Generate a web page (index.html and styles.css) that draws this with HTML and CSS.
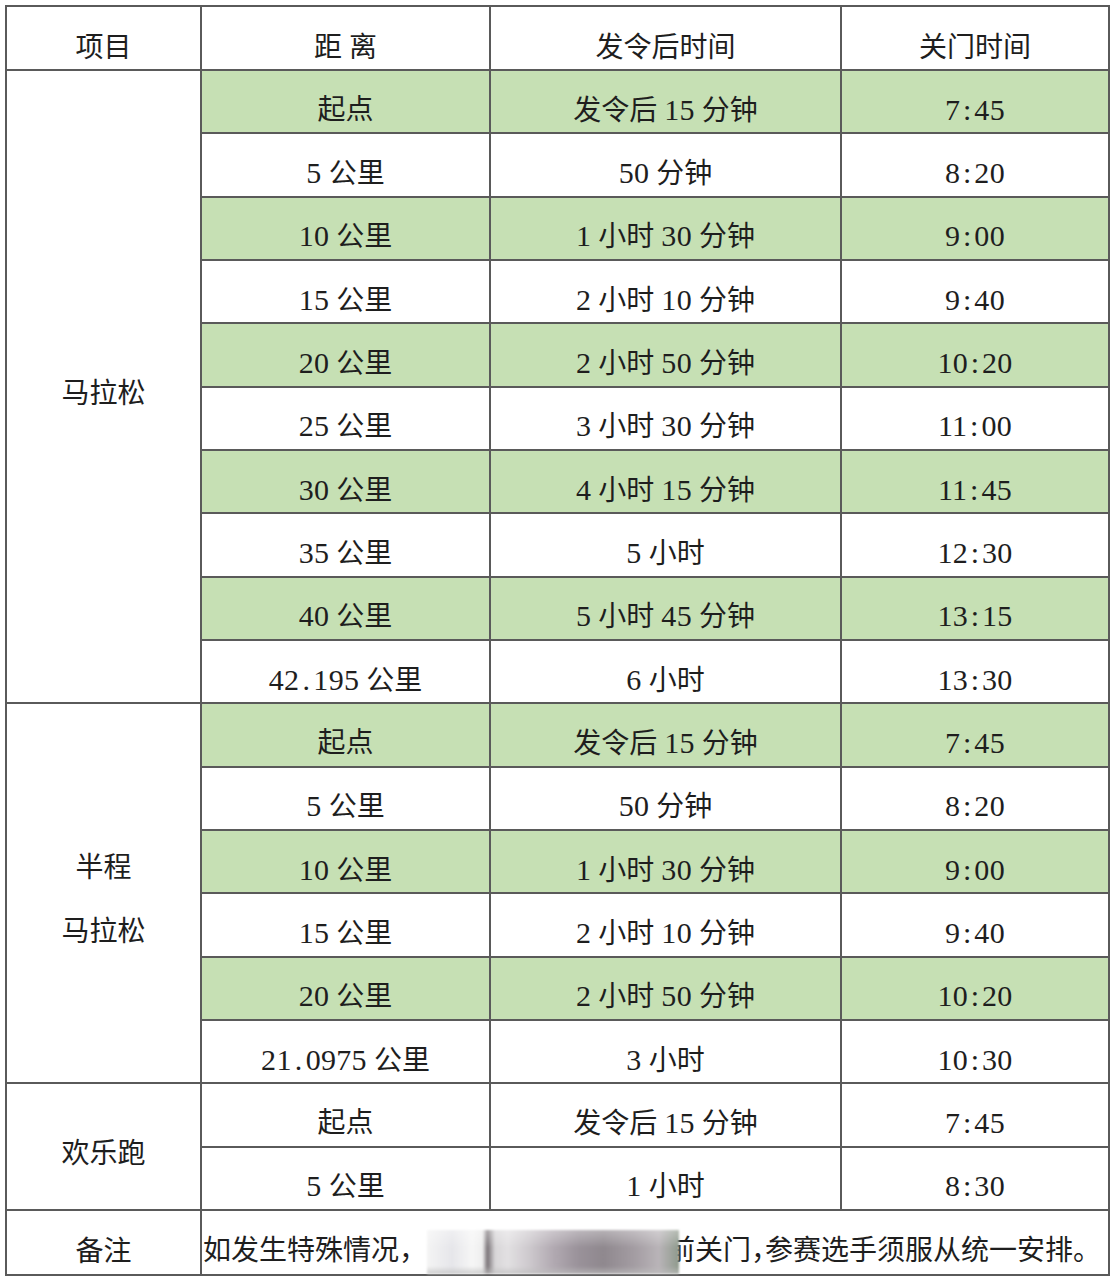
FILE: index.html
```html
<!DOCTYPE html>
<html lang="zh-CN">
<head>
<meta charset="utf-8">
<title>关门时间</title>
<link rel="stylesheet" href="styles.css">
</head>
<body>
<div class="page">
<table class="sched">
  <colgroup>
    <col class="c1"><col class="c2"><col class="c3"><col class="c4">
  </colgroup>
  <thead>
    <tr><th>项目</th><th>距 离</th><th>发令后时间</th><th>关门时间</th></tr>
  </thead>
  <tbody>
    <tr class="g"><td class="cat" rowspan="10">马拉松</td><td>起点</td><td>发令后 <span class="n">15</span> 分钟</td><td><span class="n">7<i>:</i>45</span></td></tr>
    <tr><td><span class="n">5</span> 公里</td><td><span class="n">50</span> 分钟</td><td><span class="n">8<i>:</i>20</span></td></tr>
    <tr class="g"><td><span class="n">10</span> 公里</td><td><span class="n">1</span> 小时 <span class="n">30</span> 分钟</td><td><span class="n">9<i>:</i>00</span></td></tr>
    <tr><td><span class="n">15</span> 公里</td><td><span class="n">2</span> 小时 <span class="n">10</span> 分钟</td><td><span class="n">9<i>:</i>40</span></td></tr>
    <tr class="g"><td><span class="n">20</span> 公里</td><td><span class="n">2</span> 小时 <span class="n">50</span> 分钟</td><td><span class="n">10<i>:</i>20</span></td></tr>
    <tr><td><span class="n">25</span> 公里</td><td><span class="n">3</span> 小时 <span class="n">30</span> 分钟</td><td><span class="n">11<i>:</i>00</span></td></tr>
    <tr class="g"><td><span class="n">30</span> 公里</td><td><span class="n">4</span> 小时 <span class="n">15</span> 分钟</td><td><span class="n">11<i>:</i>45</span></td></tr>
    <tr><td><span class="n">35</span> 公里</td><td><span class="n">5</span> 小时</td><td><span class="n">12<i>:</i>30</span></td></tr>
    <tr class="g"><td><span class="n">40</span> 公里</td><td><span class="n">5</span> 小时 <span class="n">45</span> 分钟</td><td><span class="n">13<i>:</i>15</span></td></tr>
    <tr><td><span class="n">42<i>.</i>195</span> 公里</td><td><span class="n">6</span> 小时</td><td><span class="n">13<i>:</i>30</span></td></tr>

    <tr class="g"><td class="cat two" rowspan="6">半程<br>马拉松</td><td>起点</td><td>发令后 <span class="n">15</span> 分钟</td><td><span class="n">7<i>:</i>45</span></td></tr>
    <tr><td><span class="n">5</span> 公里</td><td><span class="n">50</span> 分钟</td><td><span class="n">8<i>:</i>20</span></td></tr>
    <tr class="g"><td><span class="n">10</span> 公里</td><td><span class="n">1</span> 小时 <span class="n">30</span> 分钟</td><td><span class="n">9<i>:</i>00</span></td></tr>
    <tr><td><span class="n">15</span> 公里</td><td><span class="n">2</span> 小时 <span class="n">10</span> 分钟</td><td><span class="n">9<i>:</i>40</span></td></tr>
    <tr class="g"><td><span class="n">20</span> 公里</td><td><span class="n">2</span> 小时 <span class="n">50</span> 分钟</td><td><span class="n">10<i>:</i>20</span></td></tr>
    <tr><td><span class="n">21<i>.</i>0975</span> 公里</td><td><span class="n">3</span> 小时</td><td><span class="n">10<i>:</i>30</span></td></tr>

    <tr><td class="cat" rowspan="2">欢乐跑</td><td>起点</td><td>发令后 <span class="n">15</span> 分钟</td><td><span class="n">7<i>:</i>45</span></td></tr>
    <tr><td><span class="n">5</span> 公里</td><td><span class="n">1</span> 小时</td><td><span class="n">8<i>:</i>30</span></td></tr>

    <tr class="note"><td class="cat1">备注</td><td class="note-text" colspan="3">如发生特殊情况，<span class="redact"></span>前关门<span class="hw">，</span>参赛选手须服从统一安排。</td></tr>
  </tbody>
</table>
</div>
</body>
</html>
```
FILE: styles.css
```css
html, body {
  margin: 0;
  padding: 0;
  background: #ffffff;
}

.page {
  padding: 5px 0 0 5px;
  width: 1114px;
  height: 1280px;
  box-sizing: border-box;
  overflow: hidden;
}

.sched {
  border-collapse: collapse;
  table-layout: fixed;
  width: 1103px;
  font-family: "Liberation Serif", "Noto Sans CJK SC", serif;
  font-size: 28px;
  color: #1e1e1e;
}

.c1 { width: 195px; }
.c2 { width: 289px; }
.c3 { width: 351px; }
.c4 { width: 268px; }

.sched th,
.sched td {
  border: 2px solid #5a5a5a;
  height: 63.33px;
  padding: 17px 0 0 0;
  box-sizing: border-box;
  text-align: center;
  vertical-align: middle;
  font-weight: 400;
  line-height: 32px;
  white-space: nowrap;
}

.sched th {
  height: 64px;
  padding-top: 20px;
}

.sched tr.g td:not(.cat) {
  background: #c6e0b4;
}

.sched td.cat {
  background: #ffffff;
  padding-top: 14px;
}

.sched td.two {
  line-height: 64px;
}

.n {
  font-size: 30px;
  letter-spacing: 0.3px;
}

.n i {
  font-style: normal;
  display: inline-block;
  width: 14px;
  text-align: center;
}

.hw {
  font-family: "Noto Sans CJK SC", sans-serif;
  font-feature-settings: "halt" 1;
}

.sched td.note-text {
  text-align: left;
  padding-left: 1px;
  padding-top: 19px;
  overflow: visible;
}

.sched tr.note td.cat1 {
  padding-top: 19px;
}

.redact {
  display: inline-block;
  position: relative;
  z-index: 1;
  width: 252px;
  height: 44px;
  margin-right: -12px;
  vertical-align: -14px;
  background:
    linear-gradient(180deg, rgba(255,255,255,0.35) 0%, rgba(255,255,255,0) 40%, rgba(255,255,255,0) 82%, rgba(190,190,190,0.7) 100%),
    linear-gradient(90deg,
      #f4f4f4 0%, #e6e6ea 10%, #f6f6f6 18%, #eeeeee 22%,
      #7a7478 24%, #d8d6d8 27%, #e2e0e2 32%, #cfcbcf 40%,
      #b2aab2 50%, #9a929a 60%, #8f888e 70%, #a39ca2 82%,
      #b9b4b8 92%, #8f9a8c 100%);
  filter: blur(1px);
}
```
